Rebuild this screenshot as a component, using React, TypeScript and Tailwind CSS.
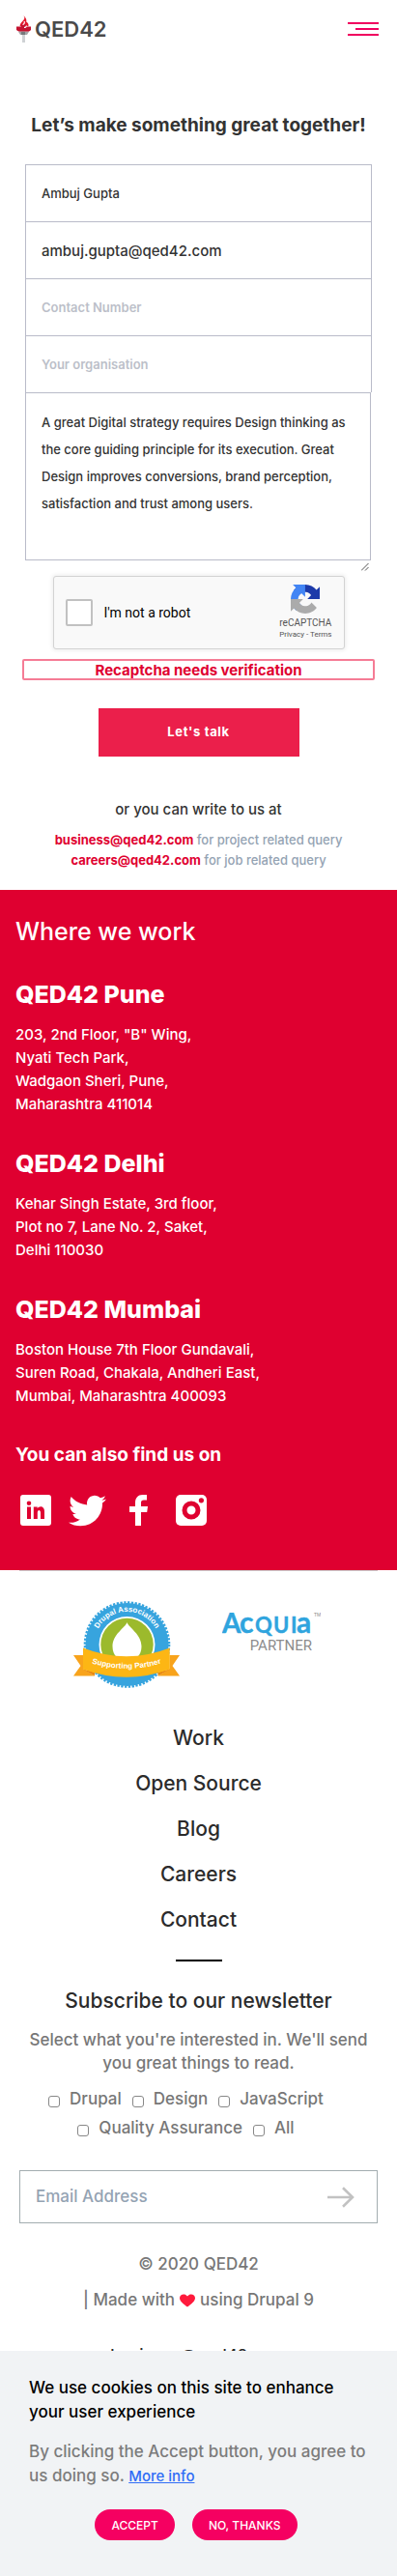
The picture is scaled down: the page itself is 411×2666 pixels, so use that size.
import React from "react";
import { FaTwitter } from "react-icons/fa";

const offices = [
  { name: "QED42 Pune", lines: ['203, 2nd Floor, "B" Wing,', "Nyati Tech Park,", "Wadgaon Sheri, Pune,", "Maharashtra 411014"] },
  { name: "QED42 Delhi", lines: ["Kehar Singh Estate, 3rd floor,", "Plot no 7, Lane No. 2, Saket,", "Delhi 110030"] },
  { name: "QED42 Mumbai", lines: ["Boston House 7th Floor Gundavali,", "Suren Road, Chakala, Andheri East,", "Mumbai, Maharashtra 400093"] },
];

const navLinks = ["Work", "Open Source", "Blog", "Careers", "Contact"];
const topicRows = [["Drupal", "Design", "JavaScript"], ["Quality Assurance", "All"]];

function TorchIcon() {
  return (
    <svg width="15" height="28" viewBox="0 0 15 28" aria-hidden="true">
      <path d="M7 0c2 1.600 1.600 3 .6 4.400C5.400 7 3.600 8.200 3.600 11H12.400C13 8.500 11.600 7.500 10.200 6.400 11 4.500 9.400 1.500 7 0z" fill="#e3192d" />
      <path d="M0 11.500h4.500L6 8.500l3 .5 1.500 2.500H15V15c-1 1.200-2.200 1.800-3 1.800H3C1.800 16.500.8 15.800 0 15z" fill="#c4122f" />
      <path d="M6.500 9.500c1.500-.5 2.200-1.800 1.600-3.500M8 12.500c1.200 0 2.500-.8 2.200-2" stroke="#fff" strokeWidth="1.200" fill="none" />
      <path d="M2 16.800h11L11 20H9v2H6v-2H4z" fill="#a3a5a8" />
      <path d="M6 20h3v8H6z" fill="#cfd2d5" />
      <path d="M5 16.800h4V20H5z" fill="#77797c" />
    </svg>
  );
}

function RecaptchaIcon() {
  return (
    <svg width="30" height="30" viewBox="0 0 64 64" aria-hidden="true">
      <path d="M64 31.955l-.033-1.370V4.687l-7.160 7.160C50.948 4.674 42.033.093 32.050.093c-10.400 0-19.622 4.960-25.458 12.640l11.736 11.860a15.550 15.550 0 0 1 4.754-5.334c2.050-1.600 4.952-2.906 8.968-2.906.485 0 .86.057 1.135.163 4.976.393 9.288 3.140 11.828 7.124l-8.307 8.307L64 31.953" fill="#1c3aa9" />
      <path d="M31.862.094l-1.370.033H4.594l7.160 7.160C4.580 13.147 0 22.060 0 32.046c0 10.400 4.960 19.622 12.640 25.458L24.500 45.768a15.550 15.550 0 0 1-5.334-4.754c-1.600-2.050-2.906-4.952-2.906-8.968 0-.485.057-.86.163-1.135.393-4.976 3.140-9.288 7.124-11.828l8.307 8.307L31.860.095" fill="#4285f4" />
      <path d="M.001 32.045l.033 1.370v25.898l7.160-7.160c5.860 7.173 14.774 11.754 24.760 11.754 10.400 0 19.622-4.960 25.458-12.640l-11.736-11.860a15.550 15.550 0 0 1-4.754 5.334c-2.050 1.600-4.952 2.906-8.968 2.906-.485 0-.86-.057-1.135-.163-4.976-.393-9.288-3.140-11.828-7.124l8.307-8.307c-10.522.04-22.400.066-27.295-.005" fill="#ababab" />
    </svg>
  );
}

function LinkedInIcon() {
  return (
    <svg width="32" height="32" viewBox="0 0 32 32" aria-hidden="true">
      <path fillRule="evenodd" fill="#fff" d="M3 0h26a3 3 0 0 1 3 3v26a3 3 0 0 1-3 3H3a3 3 0 0 1-3-3V3a3 3 0 0 1 3-3zM7 12.500V25h4V12.500zM9 6.500a2.300 2.300 0 1 0 0 4.600 2.300 2.300 0 0 0 0-4.600zM13.800 12.500V25h4v-6.500c0-3.400 3.200-3.300 3.200 0V25h4v-7.600c0-6-5.400-6.200-7.300-3.200v-1.700z" />
    </svg>
  );
}

function FacebookIcon() {
  return (
    <svg width="19" height="32" viewBox="0 0 19 32" aria-hidden="true">
      <path fill="#fff" d="M6 32V18H0v-6h6V8.500C6 3 9 0 13.500 0H18v5.500h-3.200C12.800 5.500 12 6.400 12 8.200V12h7l-.8 6H12v14z" />
    </svg>
  );
}

function InstagramIcon() {
  return (
    <svg width="32" height="32" viewBox="0 0 32 32" aria-hidden="true">
      <rect width="32" height="32" rx="5" fill="#fff" />
      <circle cx="16" cy="16" r="7" fill="none" stroke="#df0030" strokeWidth="5" />
      <circle cx="26.400" cy="5.800" r="2.600" fill="#df0030" />
    </svg>
  );
}

function DrupalBadge() {
  return (
    <svg width="110" height="90" viewBox="0 0 110 90" role="img" aria-label="Drupal Association Supporting Partner">
      <circle cx="55.500" cy="45" r="43" fill="#37a4de" />
      <circle cx="55.500" cy="45" r="43.500" fill="none" stroke="#37a4de" strokeWidth="2.600" strokeDasharray="2.300 1.500" />
      <circle cx="55.500" cy="45" r="29" fill="#fff" />
      <circle cx="55.500" cy="45" r="27.200" fill="#9cba2c" />
      <path d="M55.500 22c2 6 15 12 15 25 0 9-6 15-15 15s-15-6-15-15c0-13 13-19 15-25z" fill="#fff" />
      <path d="M0 56h10v14l12 7.500H0L7.500 67zM110 56H99.500v14l-12 7.500H110L102.500 67z" fill="#f8a31b" />
      <path d="M10 70.500l12 3v4zM99.500 70.500l-12 3v4z" fill="#e88712" />
      <path d="M10 48.500Q55 66 99.700 48.500V70.500Q55 87 10 70.500z" fill="#fdb614" />
      <path id="badge-arc" d="M21.500 45a34 34 0 0 1 68 0" fill="none" />
      <path id="badge-ribbon" d="M16 63.500Q55 76 94 63.500" fill="none" />
      <g fill="#fff" fontFamily="Liberation Sans, sans-serif" fontWeight="700" fontSize="8" textAnchor="middle">
        <text>
          <textPath href="#badge-arc" startOffset="50%">Drupal Association</textPath>
        </text>
        <text>
          <textPath href="#badge-ribbon" startOffset="50%">Supporting Partner</textPath>
        </text>
      </g>
    </svg>
  );
}

function AcquiaLogo() {
  return (
    <svg width="102" height="40" viewBox="0 0 102 40" role="img" aria-label="Acquia Partner">
      <g fill="#2fa4de" stroke="#2fa4de" strokeWidth=".4" fontFamily="Lato, sans-serif" fontWeight="700">
        <text x="0" y="21" fontSize="28">A</text>
        <text x="18" y="21" fontSize="30">c</text>
        <text x="34 53 71" y="21" fontSize="22">QUI</text>
        <text x="77" y="21" fontSize="30">a</text>
      </g>
      <text x="95" y="4" fontSize="5" fill="#888" fontFamily="Liberation Sans, sans-serif">TM</text>
      <text x="93" y="39" fontSize="15" fontWeight="400" textAnchor="end" fill="#8c8c8c" fontFamily="Roboto, sans-serif">PARTNER</text>
    </svg>
  );
}

const fieldClass =
  "block h-[59px] w-full border border-b-0 border-[#b9bbc9] bg-white px-4 text-[#333] outline-none placeholder:font-semibold placeholder:text-[#bcbfc9]";

function Header() {
  return (
    <header className="flex h-[60px] items-center justify-between pr-[19px] pl-[17px]">
      <a href="#" className="flex items-center gap-1">
        <TorchIcon />
        <span className="text-[22px] leading-7 font-semibold text-[#4a4a4a]">QED42</span>
      </a>
      <button type="button" aria-label="Menu" className="flex w-8 flex-col items-end gap-1">
        <span className="h-[2px] w-8 bg-[#f0005f]" />
        <span className="h-[2px] w-6 bg-[#f0005f]" />
        <span className="h-[2px] w-8 bg-[#f0005f]" />
      </button>
    </header>
  );
}

function ContactForm() {
  return (
    <form className="mt-[26px]">
      <input aria-label="Name" defaultValue="Ambuj Gupta" className={fieldClass + " text-[13px]"} />
      <input aria-label="Email" type="email" defaultValue="ambuj.gupta@qed42.com" className={fieldClass + " text-[15px]"} />
      <input aria-label="Contact Number" placeholder="Contact Number" className={fieldClass + " text-[13px]"} />
      <input aria-label="Your organisation" placeholder="Your organisation" className={fieldClass + " text-[13px]"} />
      <div className="relative pr-px">
        <textarea
          aria-label="Message"
          className="block h-[174px] w-full resize-none border border-[#b9bbc9] bg-white px-4 py-4 text-[13px] leading-7 text-[#333] outline-none"
          defaultValue="A great Digital strategy requires Design thinking as the core guiding principle for its execution. Great Design improves conversions, brand perception, satisfaction and trust among users."
        />
        <svg className="absolute top-[177px] right-[3px]" width="8" height="8" viewBox="0 0 8 8" aria-hidden="true">
          <path d="M0 7.500L7.500 0M4 7.500L7.500 4" stroke="#555" strokeWidth="1" />
        </svg>
      </div>

      <div className="mx-auto mt-4 flex h-[76px] w-[302px] items-center rounded-[3px] border border-[#d3d3d3] bg-[#f9f9f9] px-3 font-[Roboto,sans-serif] shadow-[0_0_4px_1px_rgba(0,0,0,0.08)]">
        <input id="robot" type="checkbox" className="size-7 appearance-none rounded-[2px] border-2 border-[#c1c1c1] bg-white" />
        <label htmlFor="robot" className="ml-3 text-[14px] font-normal text-black">I'm not a robot</label>
        <div className="ml-auto flex flex-col items-center text-[#555]">
          <RecaptchaIcon />
          <span className="mt-1 text-[10px] leading-3 font-normal">reCAPTCHA</span>
          <span className="text-[8px] leading-3 font-normal">
            <a href="#">Privacy</a> - <a href="#">Terms</a>
          </span>
        </div>
      </div>

      <p role="alert" className="-mx-[3px] mt-[10px] h-[22px] rounded-[2px] border-2 border-[#f57c95] text-center text-[15px] leading-5 font-bold text-[#df0030]">
        Recaptcha needs verification
      </p>
      <button type="button" className="mx-auto mt-[29px] block h-[50px] w-[208px] bg-[#eb1f4b] text-[13px] font-bold tracking-wider text-white">
        Let's talk
      </button>
    </form>
  );
}

function Footer() {
  return (
    <footer className="px-5 pb-[200px] text-center text-[17px] text-[#777]">
      <div className="flex justify-center gap-11 border-t border-[#ccc] pt-[31px] pr-[3px]">
        <DrupalBadge />
        <div className="pt-3">
          <AcquiaLogo />
        </div>
      </div>
      <nav className="mt-7 flex flex-col items-center text-[21px] leading-[47px] text-[#2b2b2b]">
        {navLinks.map((l) => (
          <a key={l} href="#">{l}</a>
        ))}
      </nav>
      <div className="mx-auto mt-[18px] h-[2px] w-12 bg-black" />
      <h2 className="mt-[27px] text-[21px] leading-7 text-[#2b2b2b]">Subscribe to our newsletter</h2>
      <p className="mt-[14px] leading-6">
        Select what you're interested in. We'll send
        <br />
        you great things to read.
      </p>
      <div className="mt-[11px] pr-[26px]">
        {topicRows.map((row) => (
          <div key={row[0]} className="flex h-[30px] items-center justify-center gap-[11px]">
            {row.map((t) => (
              <label key={t} className="flex items-center gap-[10px]">
                <input type="checkbox" className="mt-1 size-3 appearance-none rounded-[3px] border border-[#888] bg-white" />
                {t}
              </label>
            ))}
          </div>
        ))}
      </div>
      <form className="mt-7 flex h-[55px] items-center border border-[#a3adb0] pr-[23px] pl-4">
        <input aria-label="Email Address" type="email" placeholder="Email Address" className="min-w-0 flex-1 outline-none placeholder:text-[#94a3b3]" />
        <button type="button" aria-label="Subscribe">
          <svg width="28" height="22" viewBox="0 0 28 22" fill="none" stroke="#c2c2c2" strokeWidth="2.600">
            <path d="M0 11h26M16 1.200L26 11 16 20.800" />
          </svg>
        </button>
      </form>
      <p className="mt-6 leading-[37px]">© 2020 QED42</p>
      <p className="flex items-center justify-center gap-[5px] leading-[37px]">
        | Made with
        <svg width="16" height="14" viewBox="0 0 16 14" aria-label="love">
          <path d="M8 13.500C4 10.500 0 7.800 0 4.200 0 .2 5.500-1 8 2.500 10.500-1 16 .2 16 4.200c0 3.600-4 6.300-8 9.300z" fill="#ff1a3c" />
        </svg>
        using Drupal 9
      </p>
      <a href="#" className="mt-[25px] block leading-7 text-[#2b2b2b]">business@qed42.com</a>
    </footer>
  );
}

function CookieBanner() {
  return (
    <section className="fixed inset-x-0 bottom-0 bg-[#f1f3f5] px-[30px] pt-[26px] pb-[37px] text-[17px] leading-[25px]">
      <h2 className="text-black">We use cookies on this site to enhance your user experience</h2>
      <p className="mt-4 text-[#7c7c7c]">
        By clicking the Accept button, you agree to us doing so.{" "}
        <a href="#" className="text-[15px] text-[#2f6df6] underline">More info</a>
      </p>
      <div className="mt-[22px] flex justify-center gap-[18px] pr-[5px] text-[12px] text-white">
        <button type="button" className="h-8 rounded-full bg-[#f50061] px-[17px]">ACCEPT</button>
        <button type="button" className="h-8 rounded-full bg-[#f50061] px-[17px]">NO, THANKS</button>
      </div>
    </section>
  );
}

export default function App() {
  return (
    <div className="bg-white font-[Inter,sans-serif] font-medium">
      <Header />
      <main>
        <section className="px-[26px] pb-5">
          <h1 className="mt-14 -mx-3 text-center text-[19px] leading-7 font-bold text-[#333]">Let’s make something great together!</h1>
          <ContactForm />
          <p className="mt-[43px] text-center text-[15px] leading-6 text-[#333]">or you can write to us at</p>
          <div className="mt-[9px] text-center text-[13px] leading-[21px] text-[#94a3b3]">
            <p>
              <a href="#" className="font-bold text-[#df0030]">business@qed42.com</a> for project related query
            </p>
            <p>
              <a href="#" className="font-bold text-[#df0030]">careers@qed42.com</a> for job related query
            </p>
          </div>
        </section>
        <section className="bg-[#df0030] px-4 pt-[27px] pb-[46px] text-white">
          <h2 className="text-[25px] leading-8">Where we work</h2>
          {offices.map((o) => (
            <div key={o.name} className="mt-[33px]">
              <h3 className="text-[25px] leading-8 font-extrabold">{o.name}</h3>
              <address className="mt-[14px] text-[15px] leading-6 not-italic">
                {o.lines.map((l) => (
                  <div key={l}>{l}</div>
                ))}
              </address>
            </div>
          ))}
          <h3 className="mt-[35px] text-[19px] leading-7 font-bold">You can also find us on</h3>
          <div className="mt-[27px] flex h-8 items-center pl-[5px]">
            <a href="#" aria-label="LinkedIn"><LinkedInIcon /></a>
            <a href="#" aria-label="Twitter" className="ml-[18px]"><FaTwitter size={39} /></a>
            <a href="#" aria-label="Facebook" className="ml-6"><FacebookIcon /></a>
            <a href="#" aria-label="Instagram" className="ml-[29px]"><InstagramIcon /></a>
          </div>
        </section>
      </main>
      <Footer />
      <CookieBanner />
    </div>
  );
}
